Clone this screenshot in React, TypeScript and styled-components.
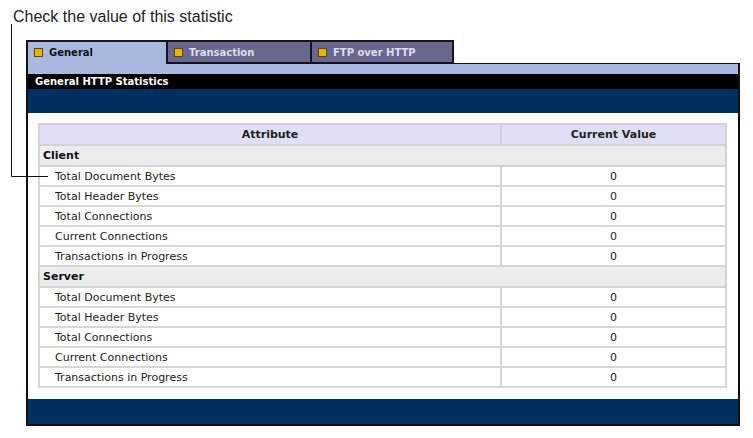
import React from 'react';
import styled, { createGlobalStyle } from 'styled-components';

const GlobalStyle = createGlobalStyle`
  html, body {
    margin: 0;
    padding: 0;
    background: #fff;
  }
  body {
    font-family: "DejaVu Sans", Verdana, sans-serif;
  }
`;

const Page = styled.div`
  position: relative;
  width: 753px;
  height: 438px;
  padding: 40px 0 0 26px;
  box-sizing: border-box;
`;

const Callout = styled.div`
  position: absolute;
  left: 13px;
  top: 8px;
  font-family: "Liberation Sans", Arial, sans-serif;
  font-size: 16px;
  color: #222;
  white-space: nowrap;
`;

const Leader = styled.svg`
  position: absolute;
  left: 0;
  top: 0;
  pointer-events: none;
`;

const Frame = styled.div`
  width: 714px;
`;

const TabRow = styled.div`
  display: flex;
  align-items: flex-end;
  height: 23px;
  position: relative;
  z-index: 1;
`;

const Tab = styled.div<{ $active?: boolean; $width: number }>`
  box-sizing: border-box;
  width: ${(p) => p.$width}px;
  height: ${(p) => (p.$active ? 24 : 23)}px;
  margin-bottom: ${(p) => (p.$active ? -1 : 0)}px;
  margin-left: -2px;
  &:first-child {
    margin-left: 0;
  }
  border: 2px solid #15151f;
  border-bottom: ${(p) => (p.$active ? 'none' : '1px solid #15151f')};
  background: ${(p) => (p.$active ? '#a9b9dd' : '#6a678f')};
  color: ${(p) => (p.$active ? '#111' : '#dedeee')};
  font-size: 10px;
  font-weight: bold;
  display: flex;
  align-items: flex-start;
  padding: 5px 0 0 6px;
  gap: 6px;
`;

const TabIcon = styled.span`
  display: inline-block;
  width: 9px;
  height: 9px;
  box-sizing: border-box;
  background: #e8b800;
  border: 1px solid #5a4a00;
  margin-top: 1px;
`;

const Panel = styled.div`
  border: 2px solid #111;
  border-top: 1px solid #111;
  background: #fff;
`;

const Strip = styled.div`
  height: 10px;
  background: #a9b9dd;
`;

const TitleBar = styled.div`
  height: 15px;
  background: #000;
  color: #fff;
  font-size: 10px;
  font-weight: bold;
  line-height: 15px;
  padding-left: 7px;
`;

const NavyBand = styled.div<{ $h: number }>`
  height: ${(p) => p.$h}px;
  background: #00305f;
`;

const Content = styled.div`
  padding: 10px 11px 11px 10px;
`;

const Table = styled.table`
  width: 689px;
  border-collapse: collapse;
  font-size: 11px;
  color: #222;
`;

const HeadCell = styled.th<{ $w?: number }>`
  ${(p) => (p.$w ? `width: ${p.$w}px;` : '')}
  height: 19px;
  border: 2px solid #d2d2d6;
  background: #dedff4;
  font-size: 11px;
  font-weight: bold;
  text-align: center;
  padding: 0;
  color: #222;
`;

const SectionCell = styled.td`
  height: 19px;
  border: 2px solid #d2d2d2;
  background: #ececec;
  font-size: 11px;
  font-weight: bold;
  color: #111;
  padding: 0 0 0 3px;
`;

const Cell = styled.td<{ $center?: boolean }>`
  height: 18px;
  border: 2px solid #d6d6d6;
  padding: 0 0 0 ${(p) => (p.$center ? 0 : 15)}px;
  text-align: ${(p) => (p.$center ? 'center' : 'left')};
  font-size: 11px;
`;

const ATTRS = [
  'Total Document Bytes',
  'Total Header Bytes',
  'Total Connections',
  'Current Connections',
  'Transactions in Progress',
];

const SECTIONS = ['Client', 'Server'];

const TABS = [
  { label: 'General', width: 142, active: true },
  { label: 'Transaction', width: 146 },
  { label: 'FTP over HTTP', width: 144 },
];

const App: React.FC = () => (
  <>
    <GlobalStyle />
    <Page>
      <Callout>Check the value of this statistic</Callout>
      <Leader width="60" height="180">
        <polyline points="11.5,24 11.5,176.5 48,176.5" fill="none" stroke="#111" strokeWidth="1" />
      </Leader>
      <Frame>
        <TabRow>
          {TABS.map((t) => (
            <Tab key={t.label} $active={t.active} $width={t.width}>
              <TabIcon />
              {t.label}
            </Tab>
          ))}
        </TabRow>
        <Panel>
          <Strip />
          <TitleBar>General HTTP Statistics</TitleBar>
          <NavyBand $h={24} />
          <Content>
            <Table>
              <thead>
                <tr>
                  <HeadCell $w={460}>Attribute</HeadCell>
                  <HeadCell>Current Value</HeadCell>
                </tr>
              </thead>
              <tbody>
                {SECTIONS.map((s) => (
                  <React.Fragment key={s}>
                    <tr>
                      <SectionCell colSpan={2}>{s}</SectionCell>
                    </tr>
                    {ATTRS.map((a) => (
                      <tr key={s + a}>
                        <Cell>{a}</Cell>
                        <Cell $center>0</Cell>
                      </tr>
                    ))}
                  </React.Fragment>
                ))}
              </tbody>
            </Table>
          </Content>
          <NavyBand $h={25} />
        </Panel>
      </Frame>
    </Page>
  </>
);

export default App;
